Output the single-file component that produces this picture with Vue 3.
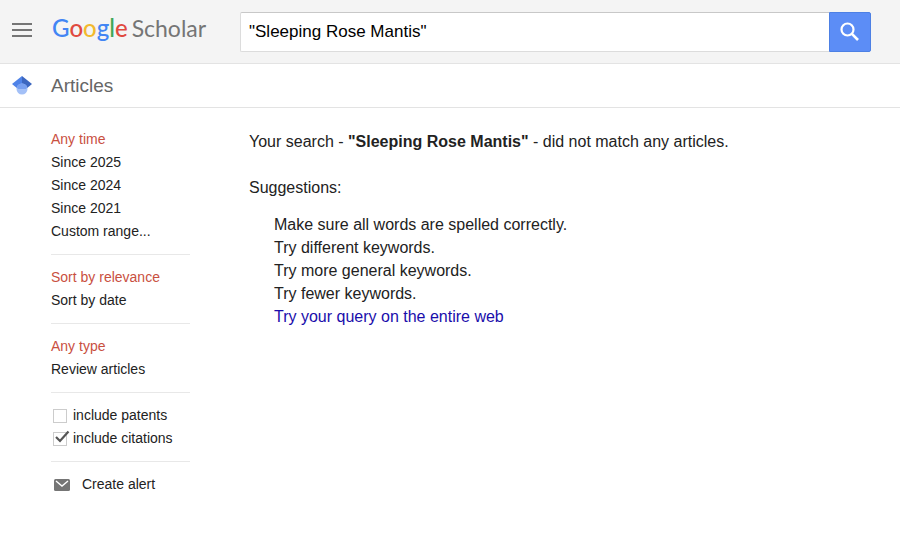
<template>
  <div class="page">
    <header class="topbar">
      <button type="button" class="menu-btn" aria-label="Menu">
        <svg width="20" height="14" viewBox="0 0 20 14">
          <path d="M0 1h20M0 7h20M0 13h20" stroke="#757575" stroke-width="2" />
        </svg>
      </button>
      <a href="#" class="logo">
        <span class="google"><span v-for="(l, i) in logo" :key="i" :class="l.color">{{ l.char }}</span></span>
        <span class="scholar">Scholar</span>
      </a>
      <form class="search" @submit.prevent>
        <input type="text" v-model="query" aria-label="Search" />
        <button type="submit" aria-label="Search">
          <svg width="20" height="20" viewBox="0 0 20 20">
            <circle cx="7.5" cy="7.5" r="6" fill="none" stroke="#fff" stroke-width="2.2" />
            <path d="M11.7 11.7l6.3 6.3" stroke="#fff" stroke-width="2.6" />
          </svg>
        </button>
      </form>
    </header>

    <div class="subbar">
      <svg class="cap" width="20" height="19" viewBox="0 0 20 19">
        <path d="M0 8L10 0v13H6z" fill="#4f83e8" />
        <path d="M10 0l10 8-6 5h-4z" fill="#3c67c0" />
        <circle cx="10" cy="13" r="5.5" fill="#a3c0f7" />
        <path d="M4.8 11.2a5.5 5.5 0 0 1 10.4 0L14 13H6z" fill="#78a0f0" />
      </svg>
      <h1>Articles</h1>
    </div>

    <div class="content">
      <nav class="sidebar">
        <ul v-for="(group, g) in filters" :key="g">
          <li v-for="(item, i) in group" :key="item">
            <a href="#" :class="{ selected: i === 0 }">{{ item }}</a>
          </li>
        </ul>
        <ul>
          <li v-for="opt in options" :key="opt.id" class="option">
            <input type="checkbox" :id="opt.id" v-model="opt.checked" />
            <svg v-if="opt.checked" class="tick" width="16" height="14" viewBox="0 0 16 14">
              <path d="M2 7l4 4 8.5-9.5" fill="none" stroke="#555" stroke-width="2.2" />
            </svg>
            <label :for="opt.id">{{ opt.label }}</label>
          </li>
        </ul>
        <ul>
          <li>
            <a href="#" class="alert">
              <svg width="16" height="12" viewBox="0 0 16 12">
                <rect width="16" height="12" rx="1.5" fill="#757575" />
                <path d="M2 2l6 5 6-5" fill="none" stroke="#fff" stroke-width="1.4" />
              </svg>
              Create alert
            </a>
          </li>
        </ul>
      </nav>

      <main class="results">
        <p>Your search - <b>"Sleeping Rose Mantis"</b> - did not match any articles.</p>
        <p>Suggestions:</p>
        <ul>
          <li v-for="tip in tips" :key="tip">{{ tip }}</li>
          <li><a href="#">Try your query on the entire web</a></li>
        </ul>
      </main>
    </div>
  </div>
</template>

<script setup>
import { ref } from 'vue'

const query = ref('"Sleeping Rose Mantis"')

const logo = [
  { char: 'G', color: 'blue' },
  { char: 'o', color: 'red' },
  { char: 'o', color: 'yellow' },
  { char: 'g', color: 'blue' },
  { char: 'l', color: 'green' },
  { char: 'e', color: 'red' }
]

// the first entry of each group is the active one
const filters = [
  ['Any time', 'Since 2025', 'Since 2024', 'Since 2021', 'Custom range...'],
  ['Sort by relevance', 'Sort by date'],
  ['Any type', 'Review articles']
]

const options = ref([
  { id: 'patents', label: 'include patents', checked: false },
  { id: 'citations', label: 'include citations', checked: true }
])

const tips = [
  'Make sure all words are spelled correctly.',
  'Try different keywords.',
  'Try more general keywords.',
  'Try fewer keywords.'
]
</script>

<style>
body {
  margin: 0;
  background: #fff;
}
</style>

<style scoped>
.page {
  font-family: "Liberation Sans", Arial, sans-serif;
  font-size: 16px;
  line-height: 23px;
  color: #222;
}

a {
  color: inherit;
  text-decoration: none;
}

ul {
  list-style: none;
  margin: 0;
  padding: 0;
}

.topbar {
  display: flex;
  align-items: center;
  box-sizing: border-box;
  height: 64px;
  padding: 0 29px 0 12px;
  background: #f4f4f4;
  border-bottom: 1px solid #e3e3e3;
}

.menu-btn {
  display: flex;
  width: 40px;
  padding: 0 0 4px;
  border: none;
  background: none;
  cursor: pointer;
}

.logo {
  display: flex;
  align-items: baseline;
  gap: 4px;
  width: 188px;
  padding-bottom: 8px;
  font-family: Lato, sans-serif;
  font-size: 23px;
  line-height: 28px;
  color: #757575;
}

.google {
  font-size: 24px;
  font-weight: 500;
}

.blue {
  color: #4285f4;
}

.red {
  color: #e04a3f;
}

.yellow {
  color: #f2b92e;
}

.green {
  color: #3fa757;
}

.search {
  display: flex;
  flex: 1;
  height: 40px;
}

.search input {
  flex: 1;
  min-width: 0;
  box-sizing: border-box;
  padding: 0 8px;
  border: 1px solid #dcdcdc;
  border-top-color: #c8c8c8;
  border-right: none;
  border-radius: 2px 0 0 2px;
  background: #fff;
  font: inherit;
  font-size: 17px;
  color: #000;
  outline: none;
}

.search button {
  display: flex;
  align-items: center;
  justify-content: center;
  width: 42px;
  padding: 0;
  border: 1px solid #4d80e4;
  border-radius: 0 2px 2px 0;
  background: #5c8df6;
  cursor: pointer;
}

.subbar {
  display: flex;
  align-items: center;
  box-sizing: border-box;
  height: 44px;
  padding-left: 12px;
  border-bottom: 1px solid #e3e3e3;
}

.cap {
  width: 20px;
  margin-right: 19px;
}

.subbar h1 {
  margin: 0;
  font-size: 19px;
  font-weight: normal;
  color: #666;
}

.content {
  display: flex;
  padding: 20px 29px 20px 51px;
}

.sidebar {
  flex: none;
  width: 139px;
  margin-right: 59px;
  font-size: 14px;
}

.sidebar ul + ul {
  margin-top: 11px;
  padding-top: 11px;
  border-top: 1px solid #e8e8e8;
}

.selected {
  color: #c9503f;
}

.option {
  position: relative;
  display: flex;
  align-items: center;
}

.option input {
  appearance: none;
  width: 14px;
  height: 14px;
  margin: 0 6px 0 2px;
  border: 1px solid #ccc;
  background: #fff;
}

.tick {
  position: absolute;
  left: 3px;
  top: 3px;
  pointer-events: none;
}

.alert {
  display: flex;
  align-items: center;
  gap: 12px;
  padding-left: 3px;
}

.results {
  flex: 1;
  padding-top: 2px;
}

.results p {
  margin: 0 0 23px;
}

.results ul {
  margin-top: -9px;
  padding-left: 25px;
}

.results a {
  color: #1a0dab;
}
</style>
